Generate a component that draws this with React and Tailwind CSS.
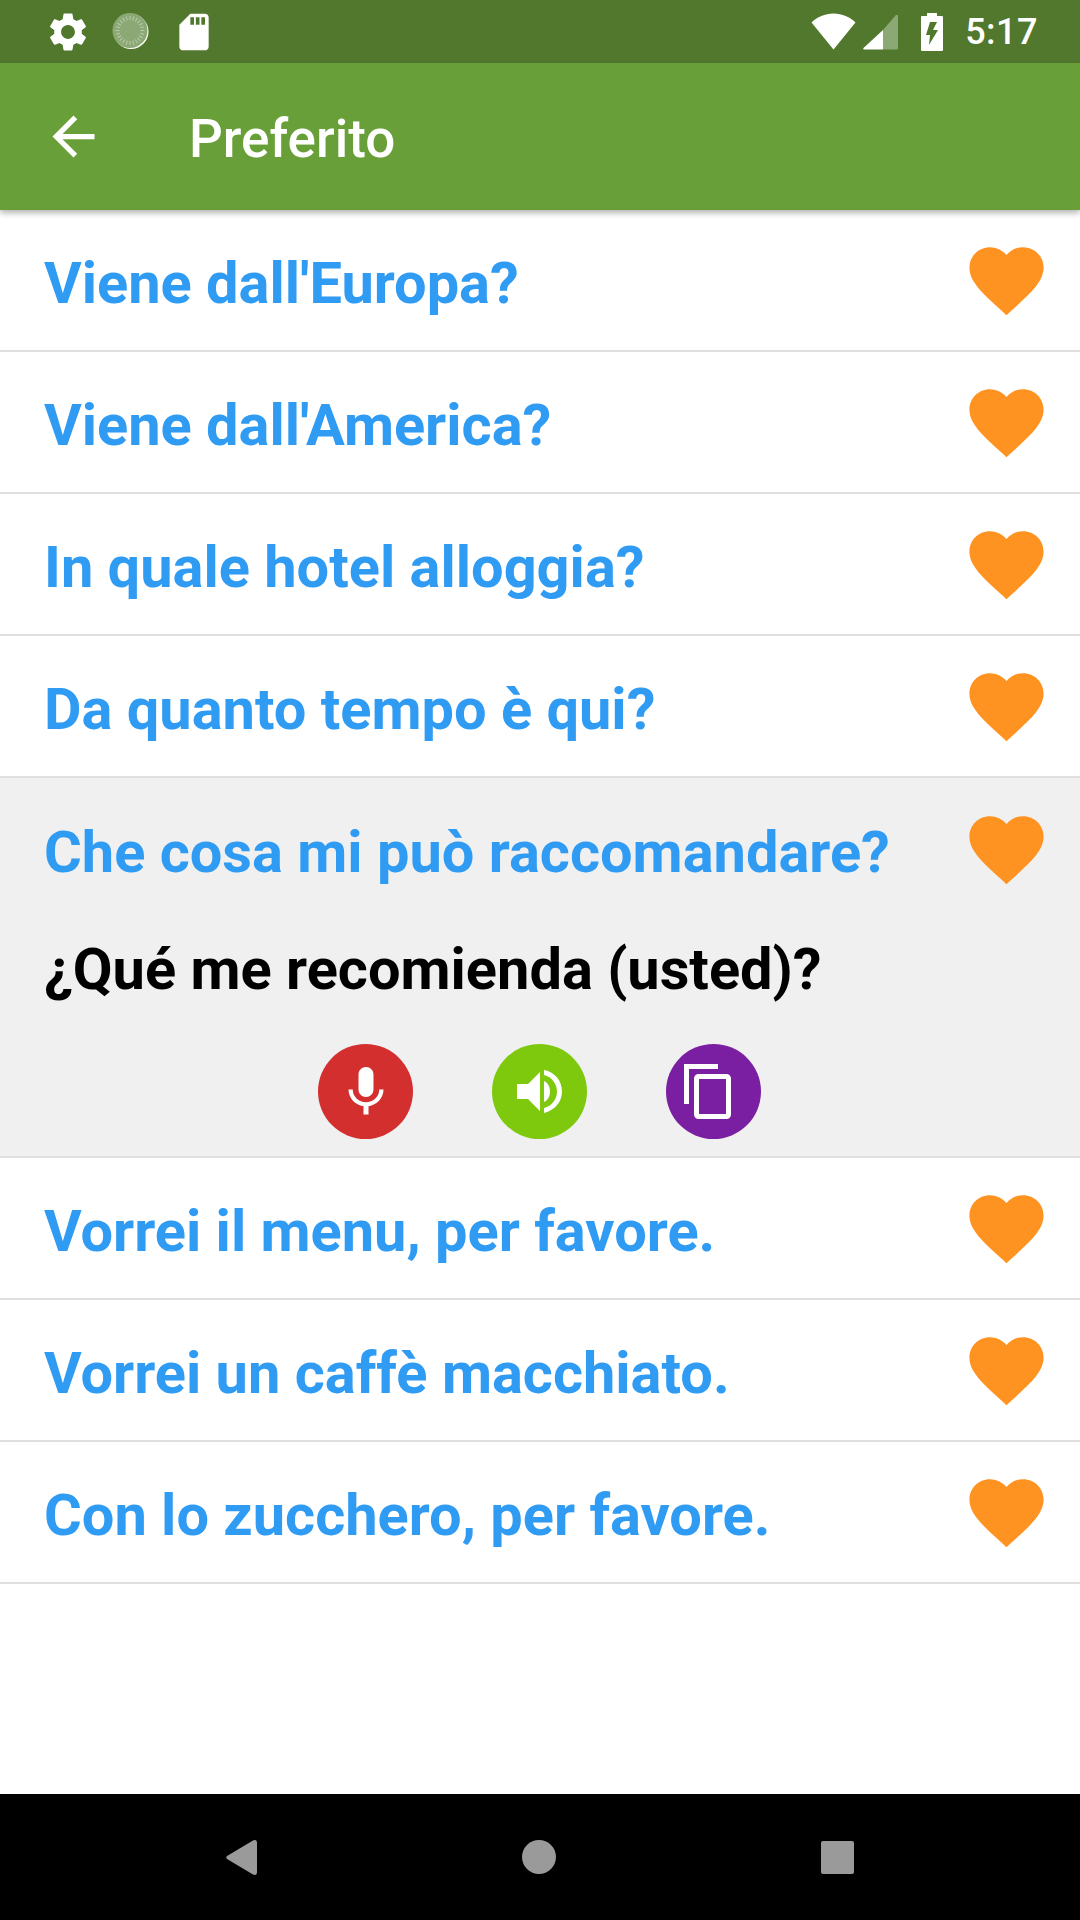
import React from 'react';

const phrases = [
  "Viene dall'Europa?",
  "Viene dall'America?",
  'In quale hotel alloggia?',
  'Da quanto tempo è qui?',
];

const phrasesAfter = [
  'Vorrei il menu, per favore.',
  'Vorrei un caffè macchiato.',
  'Con lo zucchero, per favore.',
];

const Heart = () => (
  <svg viewBox="0 0 24 24" className="w-[89px] h-[89px] shrink-0 fill-[#ff9322]">
    <path d="M12 21.35l-1.45-1.32C5.4 15.36 2 12.28 2 8.5 2 5.42 4.42 3 7.5 3c1.74 0 3.41.81 4.5 2.09C13.09 3.81 14.76 3 16.5 3 19.58 3 22 5.42 22 8.5c0 3.78-3.4 6.86-8.55 11.54L12 21.35z" />
  </svg>
);

const Phrase = ({ text }) => (
  <div className="h-[142px] flex items-center justify-between pl-[44px] pr-[29px] border-b-2 border-[#dfdfdf]">
    <span className="text-[57.75px] font-bold pt-[6px] text-[#2f9bf3] whitespace-nowrap">{text}</span>
    <Heart />
  </div>
);

const Spinner = () => (
  <svg viewBox="0 0 37 37" className="w-[37px] h-[37px]">
    <circle cx="19" cy="18.5" r="17.5" fill="#fff" />
    <circle cx="18" cy="17.5" r="17.5" fill="#8ca975" />
    {Array.from({ length: 24 }).map((_, i) => (
      <line
        key={i}
        x1="18"
        y1="3"
        x2="18"
        y2="7"
        stroke="#b9cba9"
        strokeWidth="1"
        transform={`rotate(${i * 15} 18 17.5)`}
      />
    ))}
  </svg>
);

const StatusBar = () => (
  <div className="h-[63px] bg-[#52782e] flex items-center justify-between pl-[45px] pr-[42px]">
    <div className="flex items-center">
      <svg viewBox="0 0 24 24" className="w-[46px] h-[46px] fill-white">
        <path d="M19.14 12.94c.04-.3.06-.61.06-.94 0-.32-.02-.64-.07-.94l2.03-1.58c.18-.14.23-.41.12-.61l-1.92-3.32c-.12-.22-.37-.29-.59-.22l-2.39.96c-.5-.38-1.03-.7-1.62-.94l-.36-2.54c-.04-.24-.24-.41-.48-.41h-3.84c-.24 0-.43.17-.47.41l-.36 2.54c-.59.24-1.13.57-1.62.94l-2.39-.96c-.22-.08-.47 0-.59.22L2.74 8.87c-.12.21-.08.47.12.61l2.03 1.58c-.05.3-.09.63-.09.94s.02.64.07.94l-2.03 1.58c-.18.14-.23.41-.12.61l1.92 3.32c.12.22.37.29.59.22l2.39-.96c.5.38 1.03.7 1.62.94l.36 2.54c.05.24.24.41.48.41h3.84c.24 0 .44-.17.47-.41l.36-2.54c.59-.24 1.13-.56 1.62-.94l2.39.96c.22.08.47 0 .59-.22l1.92-3.32c.12-.22.07-.47-.12-.61l-2.01-1.58zM12 15.6c-1.98 0-3.6-1.62-3.6-3.6s1.62-3.6 3.6-3.6 3.6 1.62 3.6 3.6-1.62 3.6-3.6 3.6z" />
      </svg>
      <div className="ml-[21px]">
        <Spinner />
      </div>
      <svg viewBox="0 0 24 24" className="ml-[23px] w-[44px] h-[44px] fill-white">
        <path d="M18 2h-8L4.02 8 4 20c0 1.1.9 2 2 2h12c1.1 0 2-.9 2-2V4c0-1.1-.9-2-2-2zm-6 6h-2V4h2v4zm3 0h-2V4h2v4zm3 0h-2V4h2v4z" />
      </svg>
    </div>
    <div className="flex items-center">
      <svg viewBox="0 0 45 37" className="w-[45px] h-[37px] fill-white">
        <path d="M22.5 36.5 L0.5 9.5 C6 4 14 0.5 22.5 0.5 C31 0.5 39 4 44.5 9.5 Z" />
      </svg>
      <svg viewBox="0 0 35 35" className="ml-[7px] w-[35px] h-[35px] mt-[2px]">
        <path d="M35 1.5 V33 a1.5 1.5 0 0 1 -1.5 1.5 H20 V15 L32.5 0.5 a1.2 1.2 0 0 1 2.5 1z" fill="#8ca975" />
        <path d="M20 15 V34.5 H1 a1 1 0 0 1 -.5 -1.5z" fill="#fff" />
      </svg>
      <svg viewBox="0 0 22 38" className="ml-[23px] w-[22px] h-[38px]">
        <path
          fill="#fff"
          fillRule="evenodd"
          d="M6 0h10v3h5a1 1 0 0 1 1 1v33a1 1 0 0 1-1 1H1a1 1 0 0 1-1-1V4a1 1 0 0 1 1-1h5z M9 9 L5 22 H9 L8 32 L17 17 H12 L16 9z"
        />
      </svg>
      <span className="ml-[22px] text-[36px] leading-none font-medium text-white tracking-[0.5px]">5:17</span>
    </div>
  </div>
);

const ActionButtons = () => (
  <div className="flex justify-center gap-[79px] mt-[42px] pr-[1px]">
    <div className="w-[95px] h-[95px] rounded-full bg-[#d32f2f] flex items-center justify-center">
      <svg viewBox="0 0 24 24" className="w-[60px] h-[60px] fill-white">
        <path d="M12 14c1.66 0 2.99-1.34 2.99-3L15 5c0-1.66-1.34-3-3-3S9 3.34 9 5v6c0 1.66 1.34 3 3 3zm5.3-3c0 3-2.54 5.1-5.3 5.1S6.7 14 6.7 11H5c0 3.41 2.72 6.23 6 6.72V21h2v-3.28c3.28-.48 6-3.3 6-6.72h-1.7z" />
      </svg>
    </div>
    <div className="w-[95px] h-[95px] rounded-full bg-[#7ec90e]">
      <svg viewBox="0 0 95 95" className="w-[95px] h-[95px] fill-white">
        <path d="M25 40H36L48 28V67L36 55H25Z" />
        <path d="M52 26C63 28 70 37 70 47.5C70 58 63 66 52 69V64C60 62 65 55 65 47.5C65 40 60 33 52 31Z" />
        <path d="M52 37C56 39 58 43 58 47.5C58 52 56 56 52 58Z" />
      </svg>
    </div>
    <div className="w-[95px] h-[95px] rounded-full bg-[#7b1fa2]">
      <svg viewBox="0 0 95 95" className="w-[95px] h-[95px] fill-none stroke-white stroke-[5]">
        <path d="M20.5 60V22.5H52" />
        <rect x="30.5" y="32.5" width="32" height="40" rx="2" />
      </svg>
    </div>
  </div>
);

const App = () => {
  return (
    <div className="w-[1080px] h-[1920px] bg-white flex flex-col font-['Roboto',sans-serif]">
      <StatusBar />
      <div className="relative z-10 h-[147px] bg-[#689f38] flex items-center shadow-[0_3px_6px_rgba(0,0,0,0.3)]">
        <svg viewBox="0 0 24 24" className="ml-[42px] w-[63px] h-[63px] fill-white">
          <path d="M20 11H7.83l5.59-5.59L12 4l-8 8 8 8 1.41-1.41L7.83 13H20v-2z" />
        </svg>
        <span className="ml-[84px] text-[53px] pt-[6px] font-medium text-white">Preferito</span>
      </div>
      <div className="flex-1">
        {phrases.map((p) => (
          <Phrase key={p} text={p} />
        ))}
        <div className="h-[380px] bg-[#f0f0f0] border-b-2 border-[#dfdfdf]">
          <div className="h-[142px] flex items-center justify-between pl-[44px] pr-[29px]">
            <span className="text-[57.75px] font-bold pt-[6px] text-[#2f9bf3] whitespace-nowrap">Che cosa mi può raccomandare?</span>
            <Heart />
          </div>
          <div className="pl-[44px] mt-[17px] text-[57.75px] leading-[65px] font-bold text-black whitespace-nowrap">¿Qué me recomienda (usted)?</div>
          <ActionButtons />
        </div>
        {phrasesAfter.map((p) => (
          <Phrase key={p} text={p} />
        ))}
      </div>
      <div className="h-[126px] bg-black flex items-center">
        <svg viewBox="0 0 31 35" className="ml-[226px] w-[31px] h-[35px] fill-[#9a9a9a]">
          <path d="M1 16 L27 0.5 Q31 -1 31 3 V32 Q31 36 27 34.5 L1 19 Q-0.5 17.5 1 16Z" />
        </svg>
        <div className="ml-[265px] w-[34px] h-[34px] rounded-full bg-[#9a9a9a]" />
        <div className="ml-[265px] w-[33px] h-[33px] rounded-[2px] bg-[#9a9a9a]" />
      </div>
    </div>
  );
};

export default App;
